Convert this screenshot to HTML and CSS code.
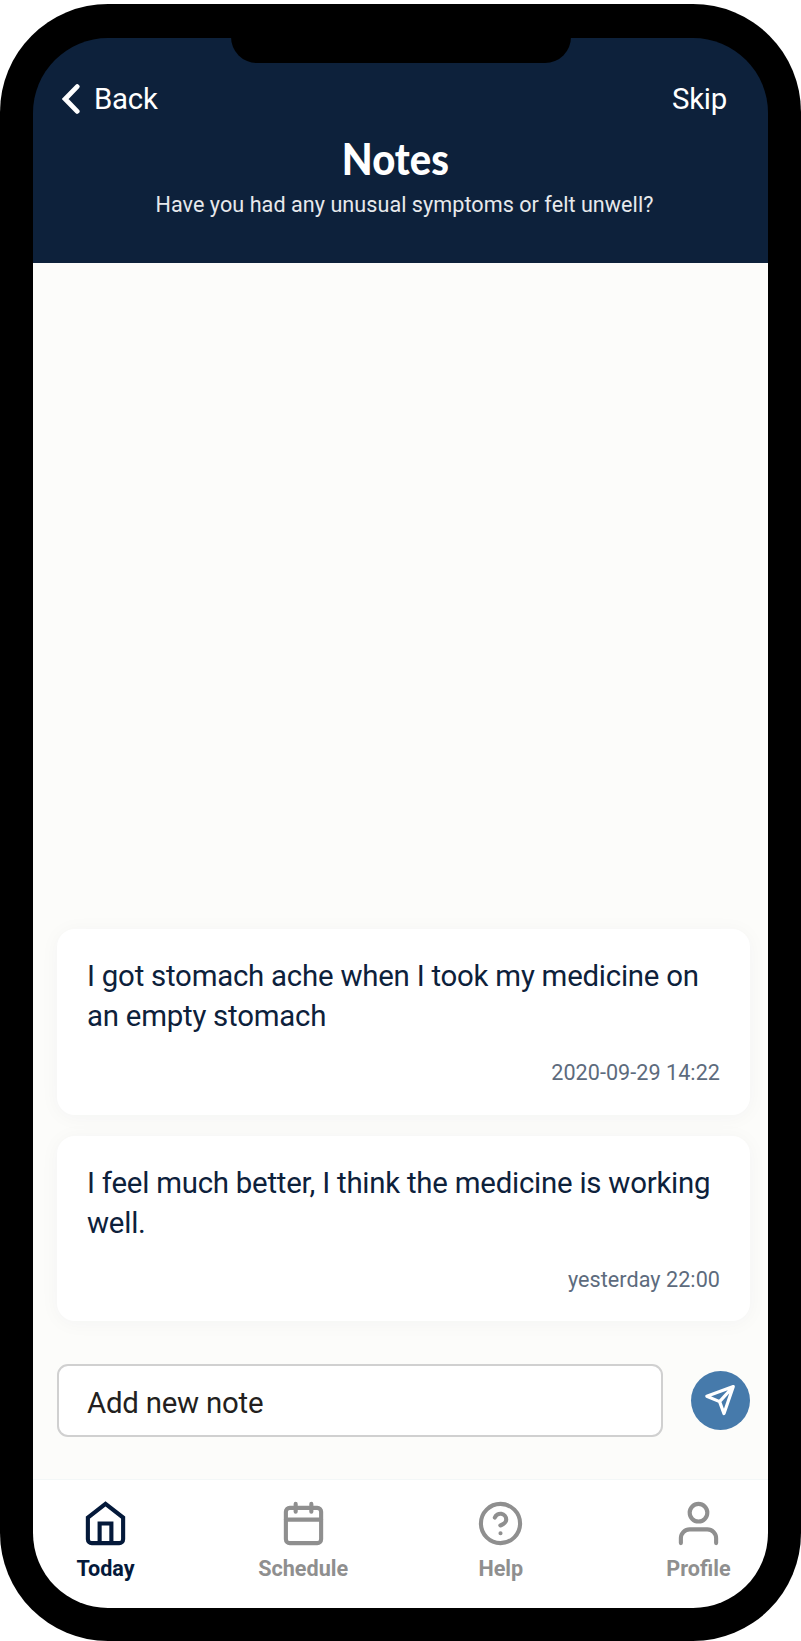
FILE: index.html
```html
<!DOCTYPE html>
<html lang="en">
<head>
<meta charset="utf-8">
<title>Notes</title>
<link rel="stylesheet" href="styles.css">
</head>
<body>
<div class="phone">
  <div class="screen">
    <div class="notch"></div>
    <header class="header">
      <div class="header-bar">
        <a class="back">
          <svg class="chevron" viewBox="0 0 18 30"><path d="M15.2 2.6 3.2 15l12 12.4"/></svg>
          <span class="back-label">Back</span>
        </a>
        <a class="skip">Skip</a>
      </div>
      <h1 class="title">Notes</h1>
      <p class="subtitle">Have you had any unusual symptoms or felt unwell?</p>
    </header>
    <main class="notes">
      <article class="card">
        <p class="message">I got stomach ache when I took my medicine on<br>an empty stomach</p>
        <time class="date">2020-09-29 14:22</time>
      </article>
      <article class="card">
        <p class="message">I feel much better, I think the medicine is working<br>well.</p>
        <time class="date">yesterday 22:00</time>
      </article>
      <div class="composer">
        <div class="field">Add new note</div>
        <div class="send">
          <svg class="send-icon" viewBox="0 0 59 59"><path d="M42.300 15.500 15.800 25.200 28.600 30.600 33 42.600zM42.300 15.500 28.600 30.600"/></svg>
        </div>
      </div>
    </main>
    <nav class="tabs">
      <a class="tab tab-active">
        <svg class="tab-icon tab-icon-home" viewBox="0 0 24 24"><path d="M3 9l9-7 9 7v11a2 2 0 0 1-2 2H5a2 2 0 0 1-2-2z"/><path d="M9 22V12h6v10"/></svg>
        <span>Today</span>
      </a>
      <a class="tab">
        <svg class="tab-icon" viewBox="0 0 24 24"><rect x="3" y="4" width="18" height="18" rx="2"/><path d="M16 2v4M8 2v4M3 10h18"/></svg>
        <span>Schedule</span>
      </a>
      <a class="tab">
        <svg class="tab-icon" viewBox="0 0 24 24"><circle cx="12" cy="12" r="10"/><path d="M9.09 9a3 3 0 0 1 5.83 1c0 2-3 3-3 3M12 17h.01"/></svg>
        <span>Help</span>
      </a>
      <a class="tab">
        <svg class="tab-icon" viewBox="0 0 24 24"><circle cx="12" cy="6.5" r="4.5"/><path d="M21 22v-2.5a4.5 4.5 0 0 0-4.5-4.5h-9A4.5 4.5 0 0 0 3 19.500V22"/></svg>
        <span>Profile</span>
      </a>
    </nav>
  </div>
</div>
</body>
</html>
```
FILE: styles.css
```css
* { box-sizing: border-box; }

body {
  margin: 0;
  padding-top: 4px;
  background: #fff;
  font-family: Roboto, "Liberation Sans", sans-serif;
}

h1, p { margin: 0; }

.phone {
  width: 801px;
  height: 1637px;
  padding: 34px 33px 33px;
  background: #000;
  border-radius: 108px;
}

.screen {
  position: relative;
  display: flex;
  flex-direction: column;
  height: 100%;
}

.notch {
  position: absolute;
  top: -1px;
  left: 198px;
  width: 340px;
  height: 26px;
  background: #000;
  border-radius: 0 0 28px 28px;
}

.header {
  height: 225px;
  padding: 41px 41px 0 29px;
  background: #0d213b;
  border-radius: 75px 75px 0 0;
  color: #fff;
  text-align: center;
}

.header-bar {
  display: flex;
  justify-content: space-between;
  font-size: 29.4px;
  letter-spacing: -0.23px;
  line-height: 40px;
}

.back {
  display: flex;
  align-items: center;
  gap: 14px;
}

.chevron {
  width: 18px;
  height: 30px;
  fill: none;
  stroke: #fff;
  stroke-width: 4.8;
  stroke-linecap: round;
}

.title {
  margin: 15px -12px 0 0;
  padding-right: 11px;
  font: 900 43px/50px Lato, sans-serif;
  transform: scaleX(0.93);
}

.subtitle {
  margin: 6px -12px 0 0;
  padding-left: 8px;
  color: #e7e9ec;
  font-size: 21.6px;
  letter-spacing: 0.04px;
  line-height: 30px;
}

.notes {
  flex: 1;
  display: flex;
  flex-direction: column;
  justify-content: flex-end;
  gap: 21px;
  padding: 0 18px 42px 24px;
  background: #fcfcfa;
}

.card {
  display: flex;
  flex-direction: column;
  gap: 22px;
  height: 185.5px;
  padding: 27px 30px 0;
  background: #fff;
  border-radius: 18px;
  box-shadow: 0 2px 20px rgba(20, 40, 70, 0.04);
}

.message {
  color: #0d213b;
  font-size: 29.4px;
  letter-spacing: -0.23px;
  line-height: 40px;
  white-space: nowrap;
}

.date {
  align-self: flex-end;
  color: #5d6b7d;
  font-size: 21.6px;
  letter-spacing: 0.04px;
  line-height: 30px;
}

.composer {
  display: flex;
  align-items: center;
  justify-content: space-between;
  margin-top: 22px;
}

.field {
  width: 606px;
  height: 73px;
  padding: 17px 28px 0;
  background: #fff;
  border: 2px solid #d0d0d0;
  border-radius: 11px;
  color: #231f20;
  font-size: 29.4px;
  letter-spacing: -0.23px;
  line-height: 40px;
}

.send {
  width: 59px;
  height: 59px;
  background: #467aab;
  border-radius: 50%;
}

.send-icon {
  display: block;
  width: 59px;
  height: 59px;
  fill: none;
  stroke: #fff;
  stroke-width: 3.2;
  stroke-linejoin: round;
}

.tabs {
  display: flex;
  justify-content: space-between;
  height: 129px;
  padding: 20px 19px 0 22px;
  background: #fff;
  border-top: 1px solid #f3f7f7;
  border-radius: 0 0 75px 75px;
}

.tab {
  display: flex;
  flex-direction: column;
  align-items: center;
  gap: 7px;
  width: 101px;
  color: #8f8f8f;
  font-size: 21.6px;
  font-weight: 700;
  line-height: 30px;
}

.tab-active { color: #04193a; }

.tab-icon {
  width: 47px;
  height: 47px;
  fill: none;
  stroke: currentColor;
  stroke-width: 2.1;
  stroke-linecap: round;
  stroke-linejoin: round;
}

.tab-icon-home {
  stroke-linecap: butt;
  stroke-linejoin: miter;
}
```
